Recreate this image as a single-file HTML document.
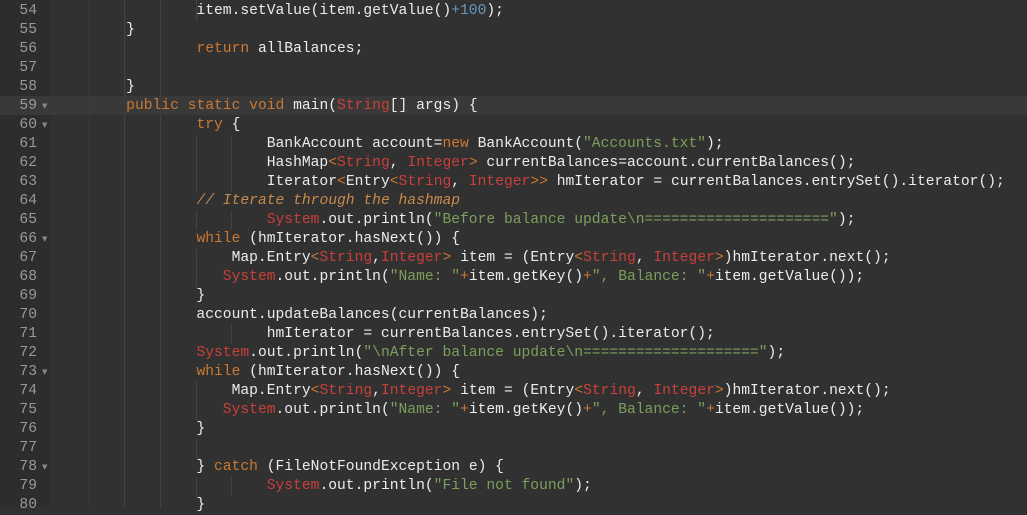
<!DOCTYPE html>
<html><head><meta charset="utf-8"><style>
html,body{margin:0;padding:0;width:1027px;height:507px;overflow:hidden;background:#313131;}
#g{position:absolute;left:0;top:0;width:51px;height:507px;background:#2d2d2d;}
.v{position:absolute;width:1px;background:#444;}
.hl{position:absolute;left:0;top:96px;width:1027px;height:19px;background:#393939;}
.ln{position:absolute;left:0;top:2px;width:37px;text-align:right;color:#999;font:14.65px/19px "Liberation Mono",monospace;}
.fd{position:absolute;left:42px;color:#888;font:7px/19px "DejaVu Sans",sans-serif;}
pre{position:absolute;left:91px;top:2px;margin:0;font:14.65px/19px "Liberation Mono",monospace;color:#ececec;}
.k{color:#cc7832}.t{color:#c9403a}.s{color:#7c9f5c}.n{color:#6897bb}.c{color:#c88a4a;font-style:italic}.o{color:#cc7832}
</style></head><body>
<div id="g"></div>
<div class="hl"></div>
<div class="v" style="left:89px;top:0;height:507px;background:#3c3c3c"></div>
<div class="v" style="left:124px;top:0;height:96px"></div>
<div class="v" style="left:124px;top:115px;height:392px"></div>
<div class="v" style="left:160px;top:0;height:96px"></div>
<div class="v" style="left:160px;top:115px;height:392px"></div>
<div class="v" style="left:196px;top:0;height:21px"></div>
<div class="v" style="left:196px;top:135px;height:57px"></div>
<div class="v" style="left:231px;top:135px;height:57px"></div>
<div class="v" style="left:196px;top:211px;height:19px"></div>
<div class="v" style="left:231px;top:211px;height:19px"></div>
<div class="v" style="left:196px;top:249px;height:38px"></div>
<div class="v" style="left:196px;top:382px;height:38px"></div>
<div class="v" style="left:196px;top:439px;height:19px"></div>
<div class="v" style="left:196px;top:477px;height:19px"></div>
<div class="v" style="left:231px;top:477px;height:19px"></div>
<div class="v" style="left:231px;top:325px;height:19px"></div>
<div class="ln">54<br>55<br>56<br>57<br>58<br>59<br>60<br>61<br>62<br>63<br>64<br>65<br>66<br>67<br>68<br>69<br>70<br>71<br>72<br>73<br>74<br>75<br>76<br>77<br>78<br>79<br>80</div>
<div class="fd" style="top:97px">▼</div>
<div class="fd" style="top:116px">▼</div>
<div class="fd" style="top:230px">▼</div>
<div class="fd" style="top:363px">▼</div>
<div class="fd" style="top:458px">▼</div>
<pre>            item.setValue(item.getValue()<span class="n">+100</span>);
    }
            <span class="k">return</span> allBalances;

    }
    <span class="k">public static void</span> main(<span class="t">String</span>[] args) {
            <span class="k">try</span> {
                    BankAccount account=<span class="k">new</span> BankAccount(<span class="s">"Accounts.txt"</span>);
                    HashMap<span class="o">&lt;</span><span class="t">String</span>, <span class="t">Integer</span><span class="o">&gt;</span> currentBalances=account.currentBalances();
                    Iterator<span class="o">&lt;</span>Entry<span class="o">&lt;</span><span class="t">String</span>, <span class="t">Integer</span><span class="o">&gt;&gt;</span> hmIterator = currentBalances.entrySet().iterator();
            <span class="c">// Iterate through the hashmap</span>
                    <span class="t">System</span>.out.println(<span class="s">"Before balance update\n====================="</span>);
            <span class="k">while</span> (hmIterator.hasNext()) {
                Map.Entry<span class="o">&lt;</span><span class="t">String</span>,<span class="t">Integer</span><span class="o">&gt;</span> item = (Entry<span class="o">&lt;</span><span class="t">String</span>, <span class="t">Integer</span><span class="o">&gt;</span>)hmIterator.next();
               <span class="t">System</span>.out.println(<span class="s">"Name: "</span><span class="o">+</span>item.getKey()<span class="o">+</span><span class="s">", Balance: "</span><span class="o">+</span>item.getValue());
            }
            account.updateBalances(currentBalances);
                    hmIterator = currentBalances.entrySet().iterator();
            <span class="t">System</span>.out.println(<span class="s">"\nAfter balance update\n===================="</span>);
            <span class="k">while</span> (hmIterator.hasNext()) {
                Map.Entry<span class="o">&lt;</span><span class="t">String</span>,<span class="t">Integer</span><span class="o">&gt;</span> item = (Entry<span class="o">&lt;</span><span class="t">String</span>, <span class="t">Integer</span><span class="o">&gt;</span>)hmIterator.next();
               <span class="t">System</span>.out.println(<span class="s">"Name: "</span><span class="o">+</span>item.getKey()<span class="o">+</span><span class="s">", Balance: "</span><span class="o">+</span>item.getValue());
            }

            } <span class="k">catch</span> (FileNotFoundException e) {
                    <span class="t">System</span>.out.println(<span class="s">"File not found"</span>);
            }</pre>
</body></html>
